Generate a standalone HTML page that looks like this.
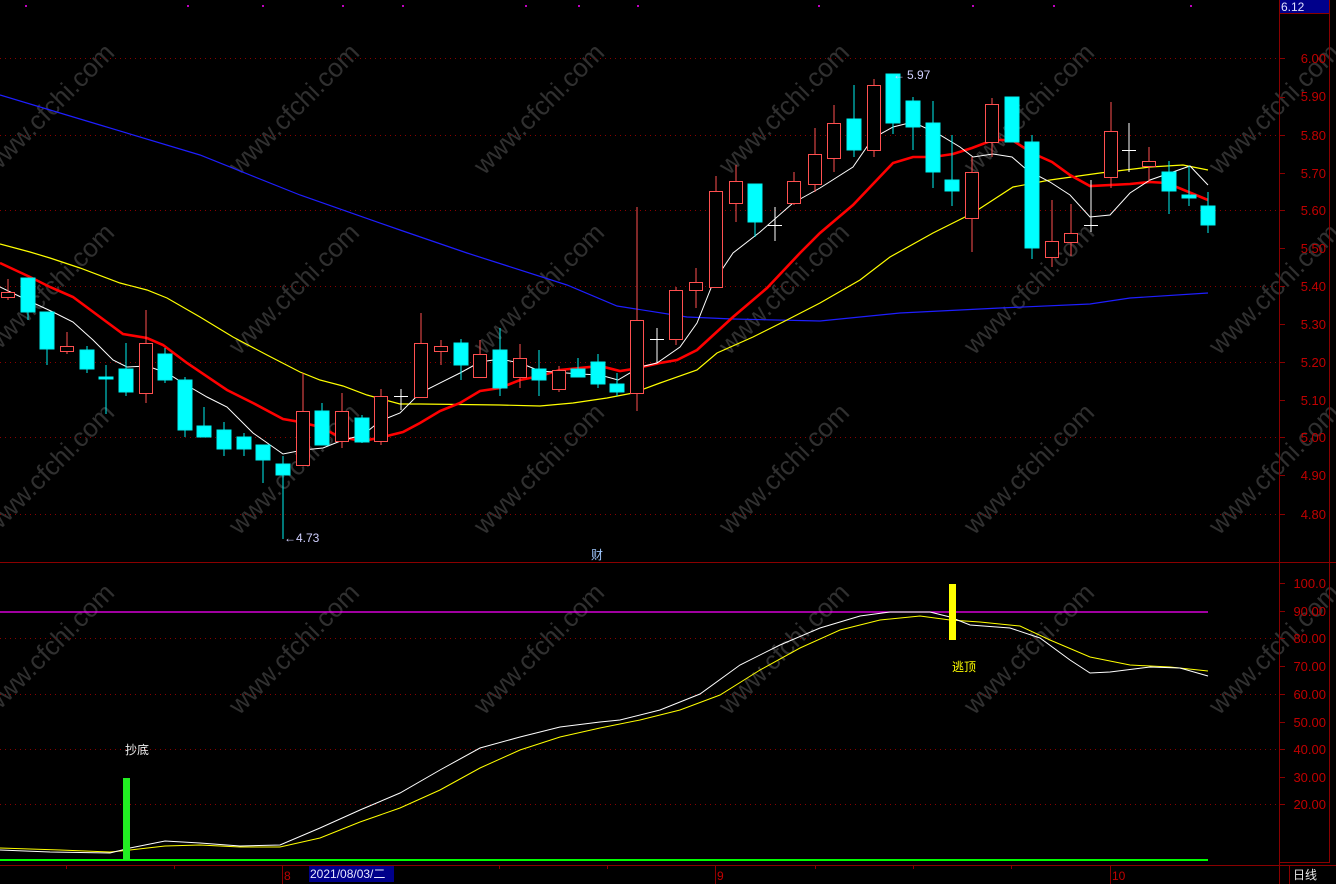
<!DOCTYPE html>
<html><head><meta charset="utf-8"><style>
html,body{margin:0;padding:0;background:#000;width:1336px;height:884px;overflow:hidden}
svg{display:block}
text{font-family:"Liberation Sans","Noto Sans CJK SC",sans-serif}
</style></head><body>
<svg width="1336" height="884" viewBox="0 0 1336 884" xmlns="http://www.w3.org/2000/svg">
<rect width="1336" height="884" fill="#000"/>
<!-- watermarks -->
<g fill="#303030" font-size="26" font-family="Liberation Sans,sans-serif">
<text transform="translate(55,115) rotate(-45)" text-anchor="middle">www.cfchi.com</text>
<text transform="translate(300,115) rotate(-45)" text-anchor="middle">www.cfchi.com</text>
<text transform="translate(545,115) rotate(-45)" text-anchor="middle">www.cfchi.com</text>
<text transform="translate(790,115) rotate(-45)" text-anchor="middle">www.cfchi.com</text>
<text transform="translate(1035,115) rotate(-45)" text-anchor="middle">www.cfchi.com</text>
<text transform="translate(1280,115) rotate(-45)" text-anchor="middle">www.cfchi.com</text>
<text transform="translate(55,295) rotate(-45)" text-anchor="middle">www.cfchi.com</text>
<text transform="translate(300,295) rotate(-45)" text-anchor="middle">www.cfchi.com</text>
<text transform="translate(545,295) rotate(-45)" text-anchor="middle">www.cfchi.com</text>
<text transform="translate(790,295) rotate(-45)" text-anchor="middle">www.cfchi.com</text>
<text transform="translate(1035,295) rotate(-45)" text-anchor="middle">www.cfchi.com</text>
<text transform="translate(1280,295) rotate(-45)" text-anchor="middle">www.cfchi.com</text>
<text transform="translate(55,475) rotate(-45)" text-anchor="middle">www.cfchi.com</text>
<text transform="translate(300,475) rotate(-45)" text-anchor="middle">www.cfchi.com</text>
<text transform="translate(545,475) rotate(-45)" text-anchor="middle">www.cfchi.com</text>
<text transform="translate(790,475) rotate(-45)" text-anchor="middle">www.cfchi.com</text>
<text transform="translate(1035,475) rotate(-45)" text-anchor="middle">www.cfchi.com</text>
<text transform="translate(1280,475) rotate(-45)" text-anchor="middle">www.cfchi.com</text>
<text transform="translate(55,655) rotate(-45)" text-anchor="middle">www.cfchi.com</text>
<text transform="translate(300,655) rotate(-45)" text-anchor="middle">www.cfchi.com</text>
<text transform="translate(545,655) rotate(-45)" text-anchor="middle">www.cfchi.com</text>
<text transform="translate(790,655) rotate(-45)" text-anchor="middle">www.cfchi.com</text>
<text transform="translate(1035,655) rotate(-45)" text-anchor="middle">www.cfchi.com</text>
<text transform="translate(1280,655) rotate(-45)" text-anchor="middle">www.cfchi.com</text>
</g>
<!-- grid -->
<g stroke="#8a0000" stroke-width="1" stroke-dasharray="1,4">
<line x1="0" y1="58.5" x2="1279" y2="58.5"/><line x1="0" y1="135.5" x2="1279" y2="135.5"/>
<line x1="0" y1="210.5" x2="1279" y2="210.5"/><line x1="0" y1="286.5" x2="1279" y2="286.5"/>
<line x1="0" y1="362.5" x2="1279" y2="362.5"/><line x1="0" y1="437.5" x2="1279" y2="437.5"/>
<line x1="0" y1="514.5" x2="1279" y2="514.5"/>
<line x1="0" y1="638.5" x2="1279" y2="638.5"/><line x1="0" y1="694.5" x2="1279" y2="694.5"/>
<line x1="0" y1="749.5" x2="1279" y2="749.5"/><line x1="0" y1="804.5" x2="1279" y2="804.5"/>
</g>
<!-- top dots -->
<g fill="#c000c0">
<rect x="25" y="5" width="2" height="2"/><rect x="187" y="5" width="2" height="2"/><rect x="262" y="5" width="2" height="2"/><rect x="342" y="5" width="2" height="2"/><rect x="402" y="5" width="2" height="2"/><rect x="525" y="5" width="2" height="2"/><rect x="578" y="5" width="2" height="2"/><rect x="637" y="5" width="2" height="2"/><rect x="818" y="5" width="2" height="2"/><rect x="972" y="5" width="2" height="2"/><rect x="1053" y="5" width="2" height="2"/><rect x="1190" y="5" width="2" height="2"/>
</g>
<!-- MA lines -->
<polyline fill="none" stroke="#1e1eff" stroke-width="1.2" points="0,95 100,125 200,155 300,195 400,230 467,253 567,285 617,306 687,317 733,319 820,321 900,313 1000,308 1090,304 1130,298 1208,293"/>
<polyline fill="none" stroke="#ffff00" stroke-width="1.2" points="0,244 30,252 50,258 80,268 120,283 147,290 167,298 200,317 233,337 267,355 300,372 320,380 343,386 367,395 400,404 420,404 500,405 540,406 573,403 607,398 633,393 660,383 697,370 717,353 753,337 783,322 820,303 860,280 890,257 933,233 973,213 1013,187 1050,180 1100,173 1150,167 1183,165 1208,170"/>
<polyline fill="none" stroke="#ff0000" stroke-width="2.6" points="0,263 30,277 50,287 73,297 100,317 123,334 147,338 163,345 187,363 227,390 253,403 283,419 300,422 320,427 340,437 363,441 383,437 403,432 420,423 440,411 460,403 480,391 500,388 520,380 540,376 560,370 600,366 620,371 633,369 660,363 677,360 697,350 733,317 767,288 800,253 820,233 853,205 893,163 913,157 933,157 953,154 972,148 993,140 1012,140 1032,153 1052,162 1070,175 1090,186 1130,184 1150,182 1167,183 1208,200"/>
<polyline fill="none" stroke="#ffffff" stroke-width="1" points="0,287 27,300 53,312 73,322 93,340 113,360 127,367 147,366 167,373 183,383 207,397 227,407 253,433 283,454 303,450 323,448 343,440 363,435 380,421 400,413 420,393 460,373 480,362 500,359 520,363 540,371 580,374 600,375 618,380 640,367 657,363 680,347 697,323 713,283 733,253 760,232 793,203 820,188 853,167 873,138 893,127 913,122 940,135 960,147 973,157 993,154 1012,157 1027,170 1050,182 1070,195 1090,217 1110,215 1130,193 1150,180 1190,166 1208,185"/>
<!-- candles -->
<g stroke-width="1">
<g stroke="#ff5050" fill="#000">
<line x1="8" y1="279" x2="8" y2="300"/><rect x="1.5" y="292.5" width="13" height="5"/>
<line x1="67" y1="332" x2="67" y2="354"/><rect x="60.5" y="346.5" width="13" height="5"/>
<line x1="146" y1="310" x2="146" y2="403"/><rect x="139.5" y="343.5" width="13" height="50"/>
<line x1="303" y1="373" x2="303" y2="465"/><rect x="296.5" y="411.5" width="13" height="54"/>
<line x1="342" y1="393" x2="342" y2="448"/><rect x="335.5" y="411.5" width="13" height="30"/>
<line x1="381" y1="389" x2="381" y2="445"/><rect x="374.5" y="396.5" width="13" height="45"/>
<line x1="421" y1="313" x2="421" y2="397"/><rect x="414.5" y="343.5" width="13" height="54"/>
<line x1="441" y1="340" x2="441" y2="365"/><rect x="434.5" y="346.5" width="13" height="5"/>
<line x1="480" y1="340" x2="480" y2="377"/><rect x="473.5" y="354.5" width="13" height="23"/>
<line x1="520" y1="344" x2="520" y2="388"/><rect x="513.5" y="358.5" width="13" height="19"/>
<line x1="559" y1="366" x2="559" y2="392"/><rect x="552.5" y="370.5" width="13" height="19"/>
<line x1="637" y1="207" x2="637" y2="411"/><rect x="630.5" y="320.5" width="13" height="73"/>
<line x1="676" y1="287" x2="676" y2="345"/><rect x="669.5" y="290.5" width="13" height="49"/>
<line x1="696" y1="268" x2="696" y2="308"/><rect x="689.5" y="282.5" width="13" height="8"/>
<line x1="716" y1="176" x2="716" y2="287"/><rect x="709.5" y="191.5" width="13" height="96"/>
<line x1="736" y1="165" x2="736" y2="222"/><rect x="729.5" y="181.5" width="13" height="22"/>
<line x1="794" y1="172" x2="794" y2="205"/><rect x="787.5" y="181.5" width="13" height="22"/>
<line x1="815" y1="128" x2="815" y2="192"/><rect x="808.5" y="154.5" width="13" height="30"/>
<line x1="834" y1="105" x2="834" y2="172"/><rect x="827.5" y="123.5" width="13" height="35"/>
<line x1="874" y1="79" x2="874" y2="157"/><rect x="867.5" y="85.5" width="13" height="65"/>
<line x1="972" y1="157" x2="972" y2="252"/><rect x="965.5" y="172.5" width="13" height="46"/>
<line x1="992" y1="98" x2="992" y2="157"/><rect x="985.5" y="104.5" width="13" height="38"/>
<line x1="1052" y1="200" x2="1052" y2="267"/><rect x="1045.5" y="241.5" width="13" height="16"/>
<line x1="1071" y1="204" x2="1071" y2="256"/><rect x="1064.5" y="233.5" width="13" height="9"/>
<line x1="1111" y1="102" x2="1111" y2="188"/><rect x="1104.5" y="131.5" width="13" height="46"/>
<line x1="1149" y1="147" x2="1149" y2="181"/><rect x="1142.5" y="161.5" width="13" height="5"/>
</g>
<g stroke="#00f0f0" fill="#00ffff">
<line x1="28" y1="278" x2="28" y2="320"/><rect x="21" y="278" width="14" height="34"/>
<line x1="47" y1="312" x2="47" y2="365"/><rect x="40" y="312" width="14" height="37"/>
<line x1="87" y1="346" x2="87" y2="373"/><rect x="80" y="350" width="14" height="19"/>
<line x1="106" y1="365" x2="106" y2="414"/><rect x="99" y="377" width="14" height="2"/>
<line x1="126" y1="343" x2="126" y2="396"/><rect x="119" y="369" width="14" height="23"/>
<line x1="165" y1="348" x2="165" y2="383"/><rect x="158" y="354" width="14" height="26"/>
<line x1="185" y1="377" x2="185" y2="437"/><rect x="178" y="380" width="14" height="50"/>
<line x1="204" y1="407" x2="204" y2="437"/><rect x="197" y="426" width="14" height="11"/>
<line x1="224" y1="422" x2="224" y2="456"/><rect x="217" y="430" width="14" height="19"/>
<line x1="244" y1="433" x2="244" y2="456"/><rect x="237" y="437" width="14" height="12"/>
<line x1="263" y1="445" x2="263" y2="483"/><rect x="256" y="445" width="14" height="15"/>
<line x1="283" y1="456" x2="283" y2="539"/><rect x="276" y="464" width="14" height="11"/>
<line x1="322" y1="403" x2="322" y2="445"/><rect x="315" y="411" width="14" height="34"/>
<line x1="362" y1="415" x2="362" y2="443"/><rect x="355" y="418" width="14" height="24"/>
<line x1="461" y1="339" x2="461" y2="380"/><rect x="454" y="343" width="14" height="22"/>
<line x1="500" y1="328" x2="500" y2="396"/><rect x="493" y="350" width="14" height="38"/>
<line x1="539" y1="350" x2="539" y2="396"/><rect x="532" y="369" width="14" height="11"/>
<line x1="578" y1="358" x2="578" y2="377"/><rect x="571" y="369" width="14" height="8"/>
<line x1="598" y1="354" x2="598" y2="388"/><rect x="591" y="362" width="14" height="22"/>
<line x1="617" y1="373" x2="617" y2="396"/><rect x="610" y="384" width="14" height="8"/>
<line x1="755" y1="184" x2="755" y2="237"/><rect x="748" y="184" width="14" height="38"/>
<line x1="854" y1="85" x2="854" y2="157"/><rect x="847" y="119" width="14" height="31"/>
<line x1="893" y1="74" x2="893" y2="134"/><rect x="886" y="74" width="14" height="49"/>
<line x1="913" y1="97" x2="913" y2="150"/><rect x="906" y="101" width="14" height="26"/>
<line x1="933" y1="101" x2="933" y2="188"/><rect x="926" y="123" width="14" height="49"/>
<line x1="952" y1="135" x2="952" y2="206"/><rect x="945" y="180" width="14" height="11"/>
<rect x="1005" y="97" width="14" height="45"/>
<line x1="1032" y1="135" x2="1032" y2="259"/><rect x="1025" y="142" width="14" height="106"/>
<line x1="1169" y1="161" x2="1169" y2="214"/><rect x="1162" y="172" width="14" height="19"/>
<line x1="1189" y1="166" x2="1189" y2="206"/><rect x="1182" y="195" width="14" height="3"/>
<line x1="1208" y1="192" x2="1208" y2="233"/><rect x="1201" y="206" width="14" height="19"/>
</g>
<g stroke="#ffffff">
<line x1="401" y1="389" x2="401" y2="410"/><line x1="394" y1="396.5" x2="408" y2="396.5"/>
<line x1="657" y1="328" x2="657" y2="363"/><line x1="650" y1="339.5" x2="664" y2="339.5"/>
<line x1="775" y1="207" x2="775" y2="241"/><line x1="768" y1="225.5" x2="782" y2="225.5"/>
<line x1="1091" y1="180" x2="1091" y2="232"/><line x1="1084" y1="225.5" x2="1098" y2="225.5"/>
<line x1="1129" y1="123" x2="1129" y2="172"/><line x1="1122" y1="150.5" x2="1136" y2="150.5"/>
</g>
</g>
<!-- annotations -->
<g fill="#d0d0ff" font-size="12">
<text x="284" y="542">←4.73</text>
<text x="893" y="79">←</text><text x="907" y="79">5.97</text>
</g>
<text x="591" y="559" fill="#a0c8ff" font-size="12">财</text>
<!-- panel separators -->
<line x1="0" y1="562.5" x2="1336" y2="562.5" stroke="#8a0000"/>
<line x1="1279.5" y1="0" x2="1279.5" y2="884" stroke="#8a0000"/>
<line x1="1329.5" y1="0" x2="1329.5" y2="862" stroke="#8a0000"/>
<line x1="0" y1="865.5" x2="1336" y2="865.5" stroke="#8a0000"/>
<line x1="1280" y1="862.5" x2="1330" y2="862.5" stroke="#8a0000"/>
<!-- lower panel -->
<line x1="0" y1="612" x2="1208" y2="612" stroke="#ff00ff" stroke-width="1.2"/>
<polyline fill="none" stroke="#ffff00" stroke-width="1" points="0,848 60,850 110,852 130,850 165,846 200,845 240,847 280,847 320,838 360,822 400,808 440,790 480,768 520,750 560,737 600,728 640,720 680,710 720,695 760,670 800,648 840,630 880,620 920,616 950,620 980,622 1020,626 1050,640 1090,657 1130,665 1170,667 1208,671"/>
<polyline fill="none" stroke="#ffffff" stroke-width="1" points="0,850 50,852 110,853 130,848 165,841 200,843 240,846 280,845 320,828 360,810 400,793 440,770 480,748 520,737 560,727 600,722 620,720 660,710 700,694 740,665 780,645 820,628 860,616 890,612 930,612 950,617 970,625 1010,628 1040,638 1070,660 1090,673 1110,672 1150,667 1180,668 1208,676"/>
<line x1="0" y1="860" x2="1208" y2="860" stroke="#00ff00" stroke-width="2"/>
<rect x="123" y="778" width="7" height="82" fill="#22ee22"/>
<rect x="949" y="584" width="7" height="56" fill="#ffff00"/>
<text x="125" y="754" fill="#f0f0f0" font-size="12">抄底</text>
<text x="952" y="671" fill="#ffff00" font-size="12">逃顶</text>
<!-- right axis labels -->
<rect x="1280" y="0" width="49" height="13" fill="#00008b"/>
<line x1="1280" y1="13.5" x2="1329" y2="13.5" stroke="#8a0000"/>
<text x="1281" y="11" fill="#e0e0ff" font-size="12">6.12</text>
<g fill="#c00000" font-size="13" text-anchor="end">
<text x="1326" y="63">6.00</text><text x="1326" y="101">5.90</text><text x="1326" y="140">5.80</text><text x="1326" y="178">5.70</text><text x="1326" y="215">5.60</text><text x="1326" y="253">5.50</text><text x="1326" y="291">5.40</text><text x="1326" y="329">5.30</text><text x="1326" y="367">5.20</text><text x="1326" y="405">5.10</text><text x="1326" y="442">5.00</text><text x="1326" y="480">4.90</text><text x="1326" y="519">4.80</text>
<text x="1326" y="588">100.0</text><text x="1326" y="616">90.00</text><text x="1326" y="643">80.00</text><text x="1326" y="671">70.00</text><text x="1326" y="699">60.00</text><text x="1326" y="727">50.00</text><text x="1326" y="754">40.00</text><text x="1326" y="782">30.00</text><text x="1326" y="809">20.00</text>
</g>
<g stroke="#8a0000">
<line x1="1280" y1="58.5" x2="1285" y2="58.5"/><line x1="1280" y1="97.5" x2="1285" y2="97.5"/><line x1="1280" y1="135.5" x2="1285" y2="135.5"/><line x1="1280" y1="173.5" x2="1285" y2="173.5"/><line x1="1280" y1="210.5" x2="1285" y2="210.5"/><line x1="1280" y1="248.5" x2="1285" y2="248.5"/><line x1="1280" y1="286.5" x2="1285" y2="286.5"/><line x1="1280" y1="324.5" x2="1285" y2="324.5"/><line x1="1280" y1="362.5" x2="1285" y2="362.5"/><line x1="1280" y1="400.5" x2="1285" y2="400.5"/><line x1="1280" y1="437.5" x2="1285" y2="437.5"/><line x1="1280" y1="475.5" x2="1285" y2="475.5"/><line x1="1280" y1="514.5" x2="1285" y2="514.5"/>
<line x1="1280" y1="583.5" x2="1285" y2="583.5"/><line x1="1280" y1="611.5" x2="1285" y2="611.5"/><line x1="1280" y1="638.5" x2="1285" y2="638.5"/><line x1="1280" y1="666.5" x2="1285" y2="666.5"/><line x1="1280" y1="694.5" x2="1285" y2="694.5"/><line x1="1280" y1="722.5" x2="1285" y2="722.5"/><line x1="1280" y1="749.5" x2="1285" y2="749.5"/><line x1="1280" y1="777.5" x2="1285" y2="777.5"/><line x1="1280" y1="804.5" x2="1285" y2="804.5"/>
<!-- bottom ticks -->
<line x1="282.5" y1="866" x2="282.5" y2="884"/><line x1="715.5" y1="866" x2="715.5" y2="884"/><line x1="1110.5" y1="866" x2="1110.5" y2="884"/>
<line x1="66.5" y1="866" x2="66.5" y2="869"/><line x1="174.5" y1="866" x2="174.5" y2="869"/><line x1="499.5" y1="866" x2="499.5" y2="869"/><line x1="607.5" y1="866" x2="607.5" y2="869"/><line x1="815.5" y1="866" x2="815.5" y2="869"/><line x1="913.5" y1="866" x2="913.5" y2="869"/><line x1="1011.5" y1="866" x2="1011.5" y2="869"/>
<line x1="1289.5" y1="866" x2="1289.5" y2="884"/>
</g>
<g fill="#c00000" font-size="12">
<text x="284" y="880">8</text><text x="717" y="880">9</text><text x="1112" y="880">10</text>
</g>
<rect x="309" y="866" width="85" height="16" fill="#00008b"/>
<text x="310" y="878" fill="#e8e8ff" font-size="12">2021/08/03/二</text>
<text x="1293" y="879" fill="#e8e8e8" font-size="12">日线</text>
</svg>
</body></html>
